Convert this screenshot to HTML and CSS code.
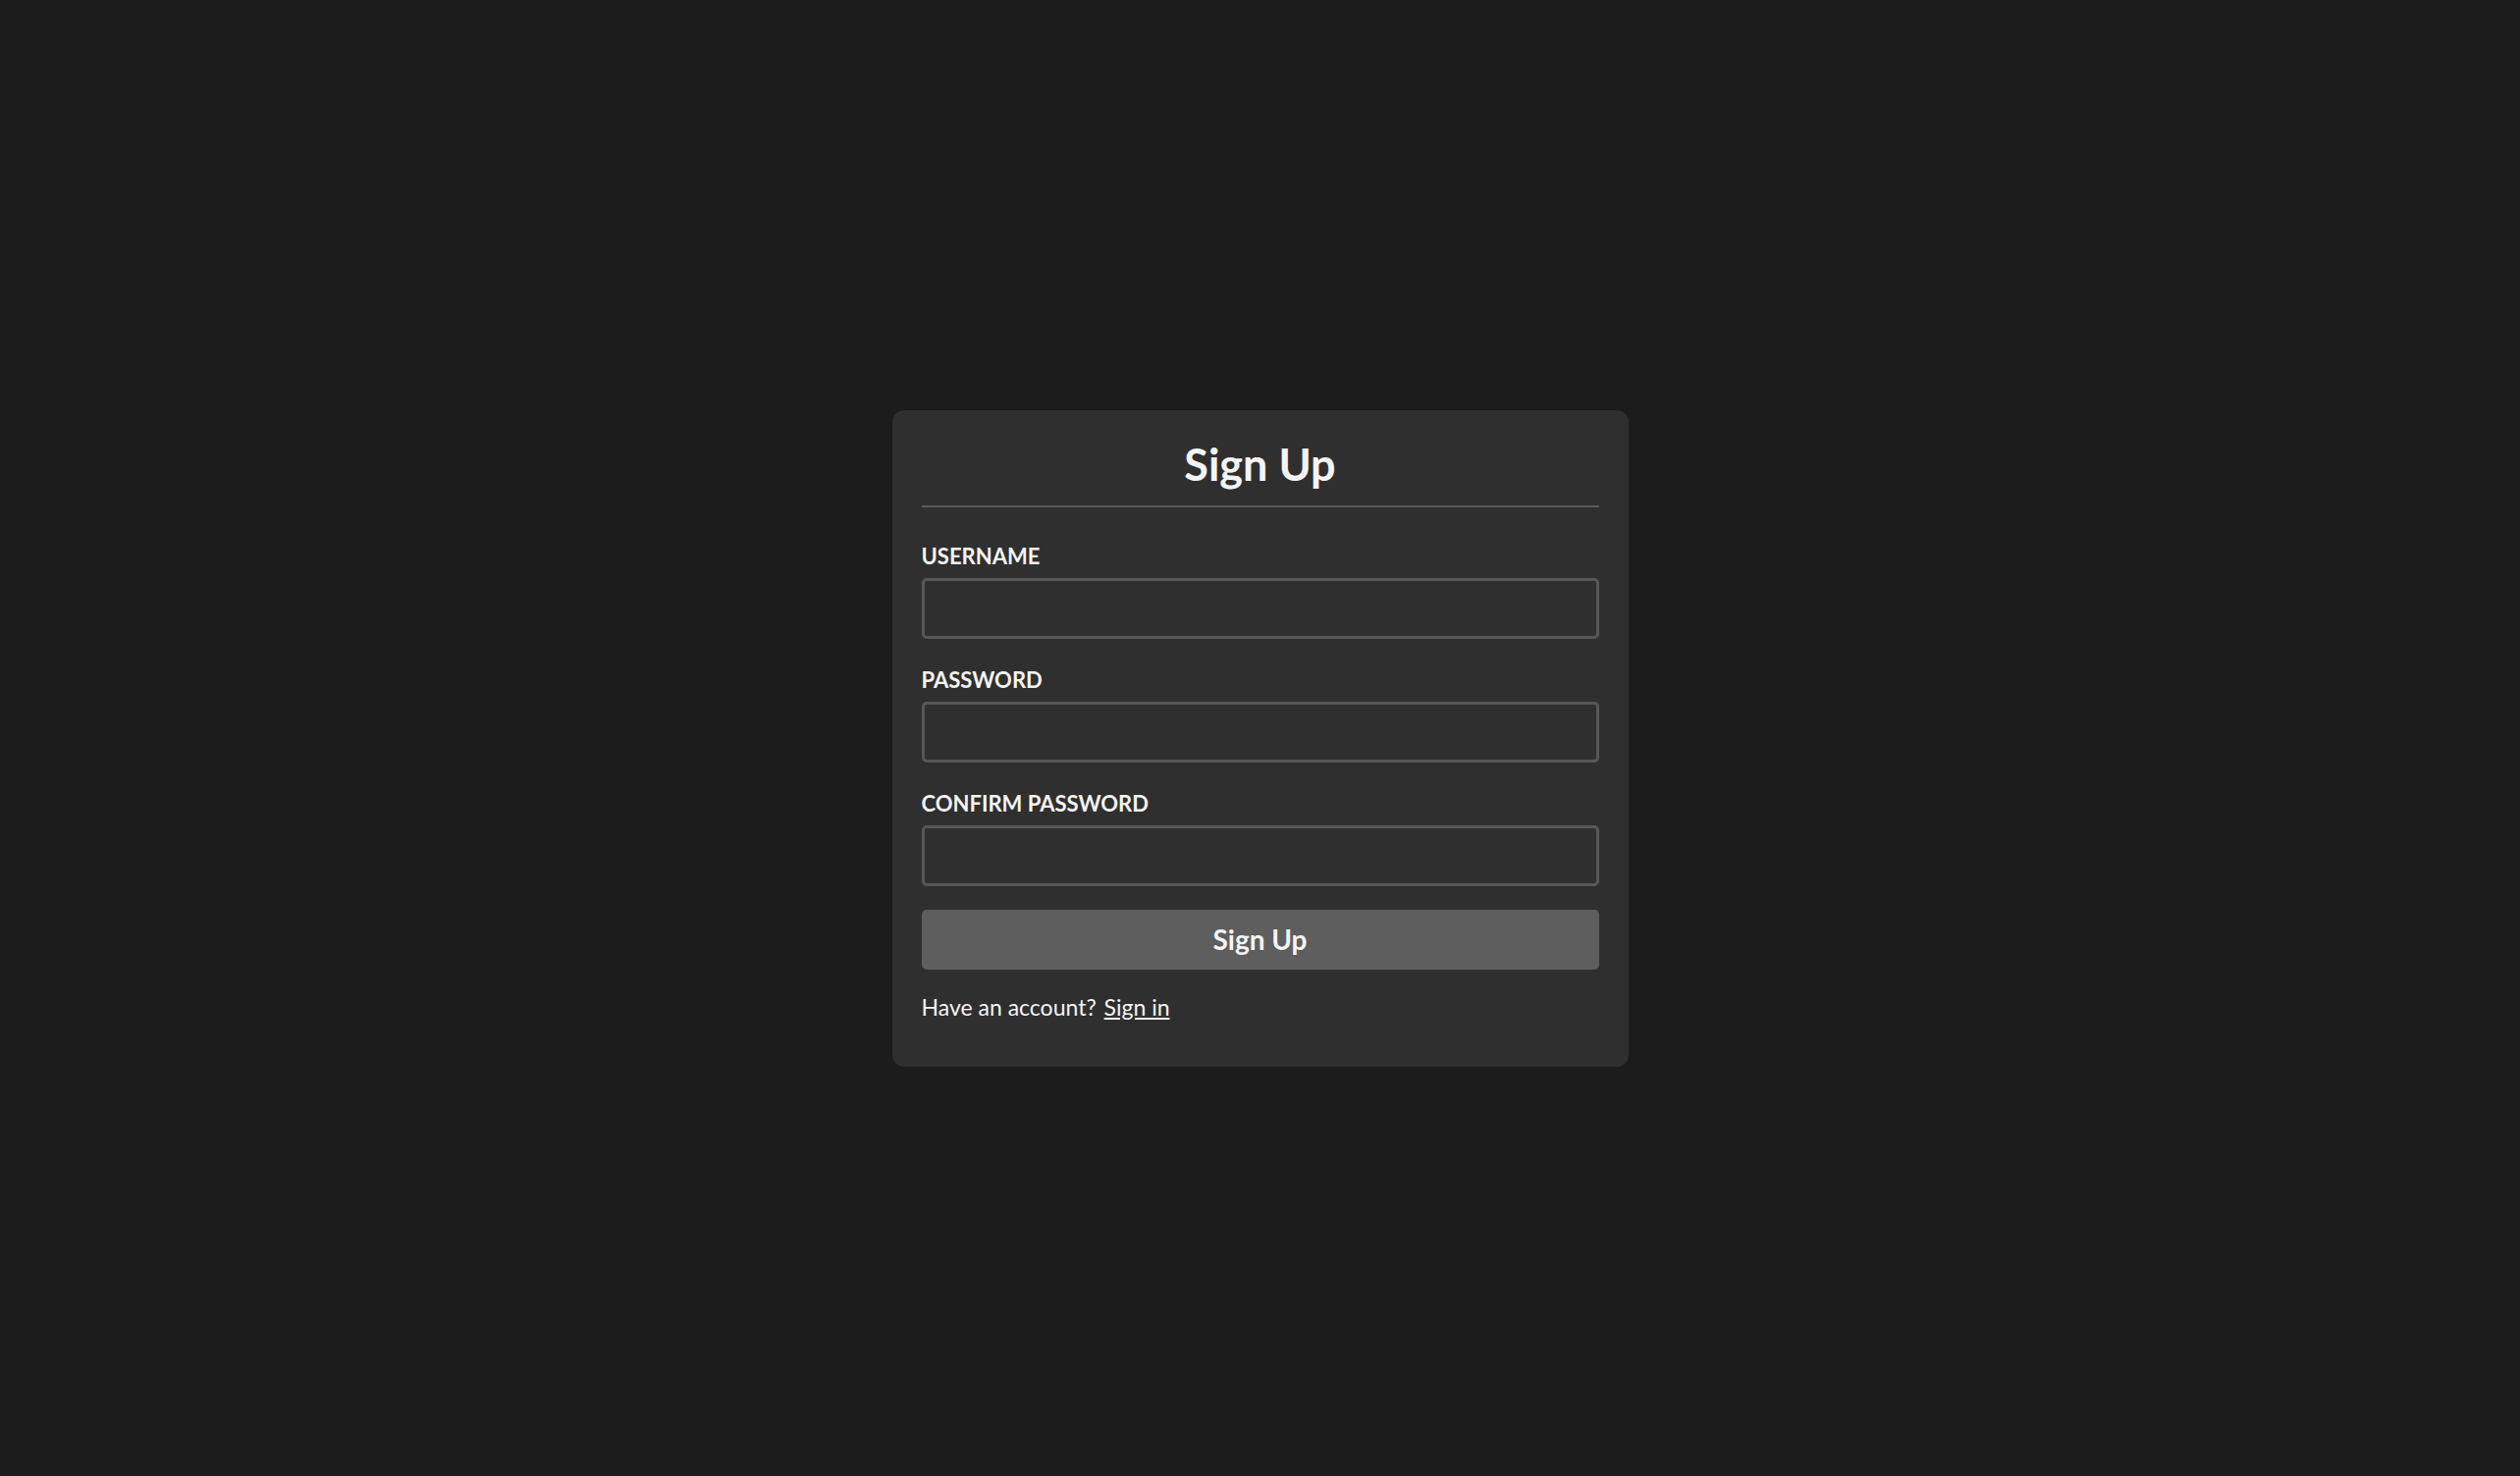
FILE: index.html
```html
<!DOCTYPE html>
<html lang="en">
<head>
<meta charset="utf-8">
<title>Sign Up</title>
<link rel="stylesheet" href="styles.css">
</head>
<body>
<main class="page">
  <form class="card">
    <h1 class="title">Sign Up</h1>
    <div class="fields">
      <div class="field">
        <label class="label" for="username">USERNAME</label>
        <input class="input" id="username" type="text">
      </div>
      <div class="field">
        <label class="label" for="password">PASSWORD</label>
        <input class="input" id="password" type="password">
      </div>
      <div class="field">
        <label class="label" for="confirm">CONFIRM PASSWORD</label>
        <input class="input" id="confirm" type="password">
      </div>
    </div>
    <button class="button" type="button">Sign Up</button>
    <p class="footer">Have an account? <a class="link" href="#">Sign in</a></p>
  </form>
</main>
</body>
</html>
```

FILE: styles.css
```css
html, body {
  margin: 0;
  padding: 0;
  height: 100%;
}
body {
  background: #1c1c1c;
  color: #f4f4f4;
  font-family: Lato, "Open Sans", "Liberation Sans", sans-serif;
}
.page {
  height: 100%;
  display: flex;
  align-items: center;
  justify-content: center;
}
.card {
  width: 750px;
  box-sizing: border-box;
  background: #2f2f2f;
  border-radius: 12px;
  padding: 28px 30px 47px;
  display: flex;
  flex-direction: column;
}
.title {
  margin: 0;
  font-size: 45px;
  line-height: 54px;
  font-weight: 700;
  text-align: center;
  padding-bottom: 15px;
  border-bottom: 2px solid #5a5a5a;
}
.fields {
  margin-top: 37px;
  display: flex;
  flex-direction: column;
  gap: 29px;
}
.field {
  display: flex;
  flex-direction: column;
  gap: 9px;
}
.label {
  font-size: 22px;
  line-height: 26px;
  font-weight: 700;
}
.input {
  height: 62px;
  box-sizing: border-box;
  background: #2f2f2f;
  border: 3px solid #575757;
  border-radius: 5px;
  color: #f4f4f4;
  font: inherit;
  font-size: 22px;
  padding: 0 14px;
  margin: 0;
}
.button {
  margin-top: 24px;
  height: 61px;
  border: none;
  border-radius: 5px;
  background: #5e5e5e;
  color: #f4f4f4;
  font-family: inherit;
  font-size: 28px;
  font-weight: 700;
  padding: 0;
}
.footer {
  margin: 24px 0 0;
  font-size: 23px;
  line-height: 28px;
}
.link {
  color: #f4f4f4;
  text-decoration: underline;
  margin-left: 2px;
}
```
